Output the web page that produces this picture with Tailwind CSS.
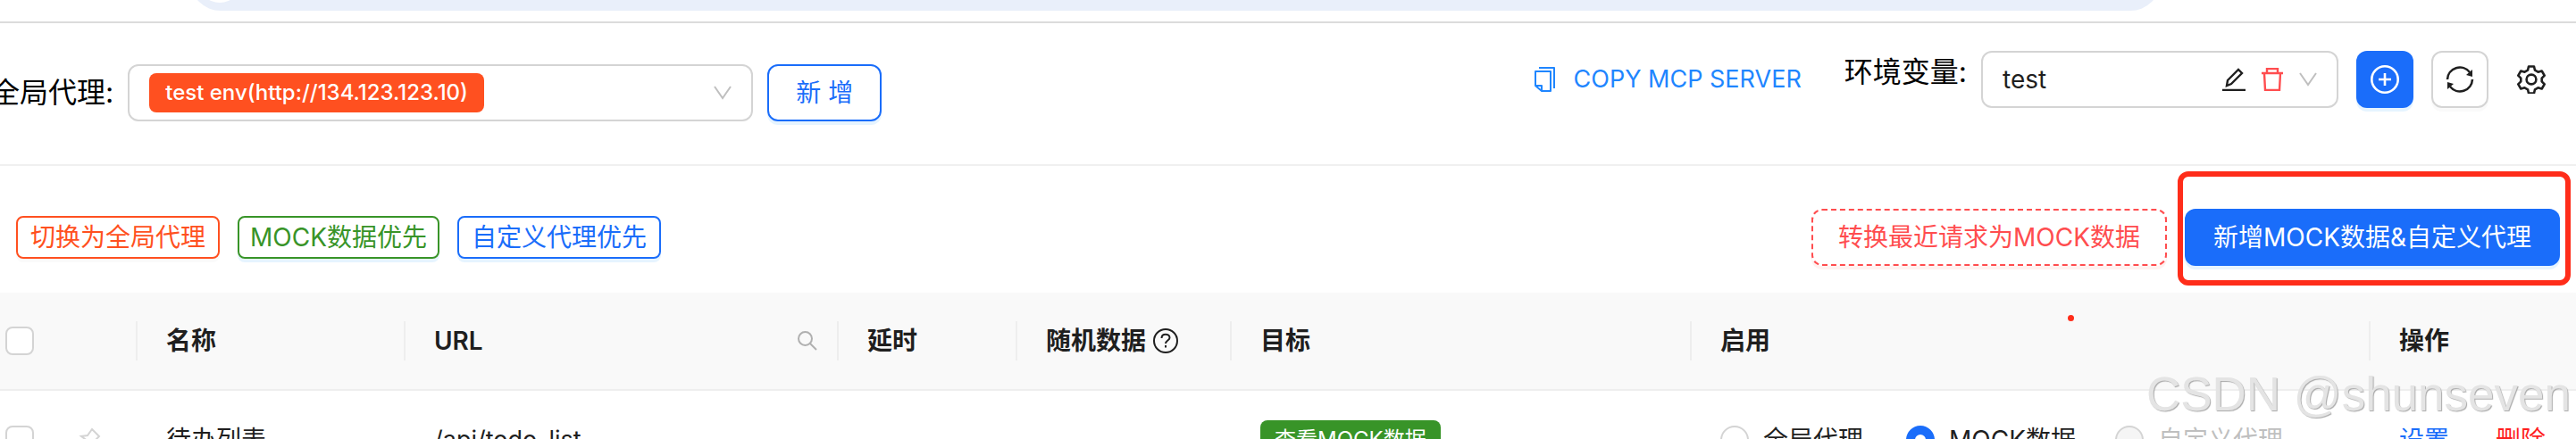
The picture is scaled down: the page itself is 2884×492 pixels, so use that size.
<!DOCTYPE html>
<html lang="zh-CN">
<head>
    <meta charset="UTF-8">
    <title>Mock 代理管理</title>
    <meta name="viewport" content="width=device-width, initial-scale=1.0">
    <script src="https://cdn.jsdelivr.net/npm/@tailwindcss/browser@4"></script>
</head>
<body class="bg-white text-[#1f1f1f] text-[28px] leading-[44px] font-['Inter','Noto_Sans_CJK_SC',sans-serif] h-screen overflow-hidden">
    <!-- browser address bar, scrolled mostly out of view -->
    <div class="h-[26px] border-b-2 border-[#dcdcdc] pl-[213px] pr-[465px] overflow-hidden">
        <div class="h-[68px] -mt-14 rounded-full bg-[#e9effa] px-2 flex items-center">
            <div class="size-[50px] rounded-full bg-white"></div>
        </div>
    </div>

    <header class="h-[160px] border-b-2 border-[#f0f0f0] flex justify-between items-start pr-[34px]">
        <div class="flex items-center pt-[46px] -ml-2.5">
            <label for="proxy" class="text-[32px] text-black mr-4 whitespace-nowrap">全局代理:</label>
            <button id="proxy" class="w-[700px] h-16 border-2 border-[#d4d4d4] rounded-xl px-[22px] flex items-center justify-between mr-4">
                <span class="h-11 px-[18px] rounded-lg bg-[#ff5020] text-white text-[24px] font-medium whitespace-nowrap">test env(http://134.123.123.10)</span>
                <svg class="w-5 h-4" viewBox="0 0 20 16" fill="none" stroke="#bfbfbf" stroke-width="2"><path d="M1 1l9 13 9-13"/></svg>
            </button>
            <button class="w-32 h-16 border-2 border-[#1a6dfa] text-[#1a6dfa] rounded-xl shadow-[0_4px_0_#e6f4ff]">新 增</button>
        </div>
        <div class="flex items-center pt-[31px]">
            <a href="#" class="flex items-center gap-5 text-[#1f86ff] text-[27px] mr-12 whitespace-nowrap">
                <svg class="w-6 h-7" viewBox="0 0 24 28" fill="none" stroke="currentColor" stroke-width="2" stroke-linejoin="round"><path d="M5 1h17v23M1 5h17v22H8l-7-6zM1 21h7v6"/></svg>
                COPY MCP SERVER
            </a>
            <label for="env" class="text-[32px] text-black mr-4 pb-4 whitespace-nowrap">环境变量:</label>
            <div class="w-[400px] h-16 border-2 border-[#d4d4d4] rounded-xl px-[22px] flex items-center mr-5">
                <input id="env" value="test" class="flex-1 min-w-0 outline-none">
                <button aria-label="编辑" class="mr-[18px]"><svg class="size-[26px]" viewBox="0 0 26 26" fill="none" stroke="#1f1f1f" stroke-width="2.4"><path d="M0 25h26M5 20l1-6L18 2l4 4-12 12z"/></svg></button>
                <button aria-label="删除" class="mr-[18px]"><svg class="w-6 h-[26px]" viewBox="0 0 24 26" fill="none" stroke="#ff4d4f" stroke-width="2.4"><path d="M0 6h24M6 6V1h12v5M3 6l1 19h16l1-19"/></svg></button>
                <svg class="w-5 h-4" viewBox="0 0 20 16" fill="none" stroke="#bfbfbf" stroke-width="2"><path d="M1 1l9 13 9-13"/></svg>
            </div>
            <button aria-label="添加" class="size-16 rounded-xl bg-[#1a6dfa] flex items-center justify-center mr-5 shadow-[0_4px_0_#e6f4ff]">
                <svg class="size-8" viewBox="0 0 32 32" fill="none" stroke="white" stroke-width="2.6"><circle cx="16" cy="16" r="14.7"/><path d="M16 9v14M9 16h14"/></svg>
            </button>
            <button aria-label="刷新" class="size-16 rounded-xl border-2 border-[#d4d4d4] flex items-center justify-center mr-8 shadow-[0_4px_0_#fafafa]">
                <svg class="size-8" viewBox="0 0 32 32" fill="none" stroke="#1f1f1f" stroke-width="2.6"><path d="M2 16A14 14 0 0 1 27 8M30 16A14 14 0 0 1 5 24"/><path d="M30 5v8l-7-2zM2 27v-8l7 2z" fill="#1f1f1f" stroke="none"/></svg>
            </button>
            <button aria-label="设置">
                <svg class="size-8" viewBox="0 0 32 32" fill="none" stroke="#1f1f1f" stroke-width="2.6" stroke-linejoin="round"><circle cx="16" cy="16" r="5.4"/><path d="M13 1.500h6l1 4.200 3.500 2 4.200-1.200 3 5.200-3 3v3.600l3 3-3 5.200-4.200-1.200-3.500 2-1 4.200h-6l-1-4.200-3.500-2-4.200 1.200-3-5.200 3-3v-3.600l-3-3 3-5.200 4.200 1.200 3.500-2z"/></svg>
            </button>
        </div>
    </header>

    <div class="flex justify-between items-center h-[142px] pt-[18px] px-[18px] whitespace-nowrap">
        <div class="flex gap-5">
            <button class="h-12 px-3.5 border-2 rounded-lg border-[#ff5020] text-[#ff5020] shadow-[0_4px_0_#fafafa]">切换为全局代理</button>
            <button class="h-12 px-3 border-2 rounded-lg border-[#389428] text-[#389428] shadow-[0_4px_0_#e6f4ff]">MOCK数据优先</button>
            <button class="h-12 px-3.5 border-2 rounded-lg border-[#1a6dfa] text-[#1a6dfa] shadow-[0_4px_0_#e6f4ff]">自定义代理优先</button>
        </div>
        <div class="flex items-center gap-5">
            <button class="h-16 px-7 border-2 border-dashed rounded-xl border-[#ff4d4f] text-[#ff4d4f] shadow-[0_4px_0_#fff2f0]">转换最近请求为MOCK数据</button>
            <div class="relative">
                <button class="h-16 px-8 rounded-xl bg-[#1a6dfa] text-white shadow-[0_4px_0_#e6f4ff]">新增MOCK数据&amp;自定义代理</button>
                <div class="absolute -left-2 -right-3 -top-[42px] -bottom-[22px] border-6 border-[#ff2d1a] rounded-xl pointer-events-none"></div>
            </div>
        </div>
    </div>

    <table class="w-full table-fixed border-separate border-spacing-0 text-left whitespace-nowrap">
        <colgroup>
            <col class="w-[154px]"><col class="w-[300px]"><col class="w-[485px]"><col class="w-[200px]"><col class="w-[240px]"><col class="w-[515px]"><col class="w-[760px]"><col>
        </colgroup>
        <thead>
            <tr class="h-[110px] bg-[#f9f9f9] *:border-b-2 *:border-[#eeeeee]">
                <th class="p-0 pl-1.5"><div class="flex items-center h-11 border-r-2 border-[#eeeeee]"><input type="checkbox" aria-label="全选" class="appearance-none size-8 rounded-lg border-2 border-[#d4d4d4] bg-white"></div></th>
                <th class="p-0 font-semibold"><div class="h-11 pl-8 border-r-2 border-[#eeeeee]">名称</div></th>
                <th class="p-0 font-semibold"><div class="h-11 pl-8 pr-[22px] border-r-2 border-[#eeeeee] flex items-center justify-between">URL
                    <button aria-label="搜索"><svg class="size-[22px]" viewBox="0 0 22 22" fill="none" stroke="#b0b0b0" stroke-width="2"><circle cx="8.5" cy="8.5" r="7.5"/><path d="M14 14l7 7"/></svg></button></div></th>
                <th class="p-0 font-semibold"><div class="h-11 pl-8 border-r-2 border-[#eeeeee]">延时</div></th>
                <th class="p-0 font-semibold"><div class="h-11 pl-8 border-r-2 border-[#eeeeee] flex items-center gap-2">随机数据
                    <svg class="size-7" viewBox="0 0 28 28" fill="none" stroke="#1f1f1f" stroke-width="2"><circle cx="14" cy="14" r="13"/><path d="M9.500 11c0-6 9-5.500 9-.5 0 3-4.500 3-4.500 6.500M14 19v2.500"/></svg></div></th>
                <th class="p-0 font-semibold"><div class="h-11 pl-8 border-r-2 border-[#eeeeee]">目标</div></th>
                <th class="p-0 font-semibold"><div class="h-11 pl-8 border-r-2 border-[#eeeeee]">启用</div></th>
                <th class="p-0 font-semibold"><div class="h-11 pl-8">操作</div></th>
            </tr>
        </thead>
        <tbody>
            <tr class="h-[110px]">
                <td class="pl-1.5"><div class="flex items-center gap-[50px]"><input type="checkbox" aria-label="选择待办列表" class="appearance-none size-8 rounded-lg border-2 border-[#d4d4d4]">
                    <svg class="size-7" viewBox="0 0 28 28" fill="none" stroke="#d4d4d4" stroke-width="2"><path d="M15 2l8 8-5 5v6L3 10l7-1z M10 16l-8 10"/></svg></div></td>
                <td class="pl-8">待办列表</td>
                <td class="pl-8 text-[27px]">/api/todo_list</td>
                <td></td>
                <td></td>
                <td class="pl-8"><button class="block h-11 px-4 rounded-lg bg-[#389428] text-white text-[24px]">查看MOCK数据</button></td>
                <td class="pl-8">
                    <div class="flex">
                        <label class="flex items-center gap-4 mr-12"><input type="radio" name="mode" class="appearance-none size-8 rounded-full border-2 border-[#d4d4d4]">全局代理</label>
                        <label class="flex items-center gap-4 mr-11"><input type="radio" name="mode" checked class="appearance-none size-8 rounded-full border-2 border-[#d4d4d4] checked:border-10 checked:border-[#1a6dfa]">MOCK数据</label>
                        <label class="flex items-center gap-4 text-[#bfbfbf]"><input type="radio" name="mode" disabled class="appearance-none size-8 rounded-full border-2 border-[#d4d4d4] bg-[#f5f5f5]">自定义代理</label>
                    </div>
                </td>
                <td class="pl-8"><a href="#" class="text-[#1a6dfa] mr-[52px]">设置</a><a href="#" class="text-[#ff1f1f]">删除</a></td>
            </tr>
        </tbody>
    </table>

    <!-- overlays -->
    <div class="absolute left-[2315px] top-[353px] size-[7px] rounded-full bg-[#ff2d1a]"></div>
    <div class="absolute right-1.5 bottom-3.5 text-[53px] leading-[72px] text-[#e4e4e4] font-['Liberation_Sans',sans-serif] [text-shadow:1px_1px_1px_#a8a8a8] whitespace-nowrap pointer-events-none">CSDN @shunseven</div>
</body>
</html>
